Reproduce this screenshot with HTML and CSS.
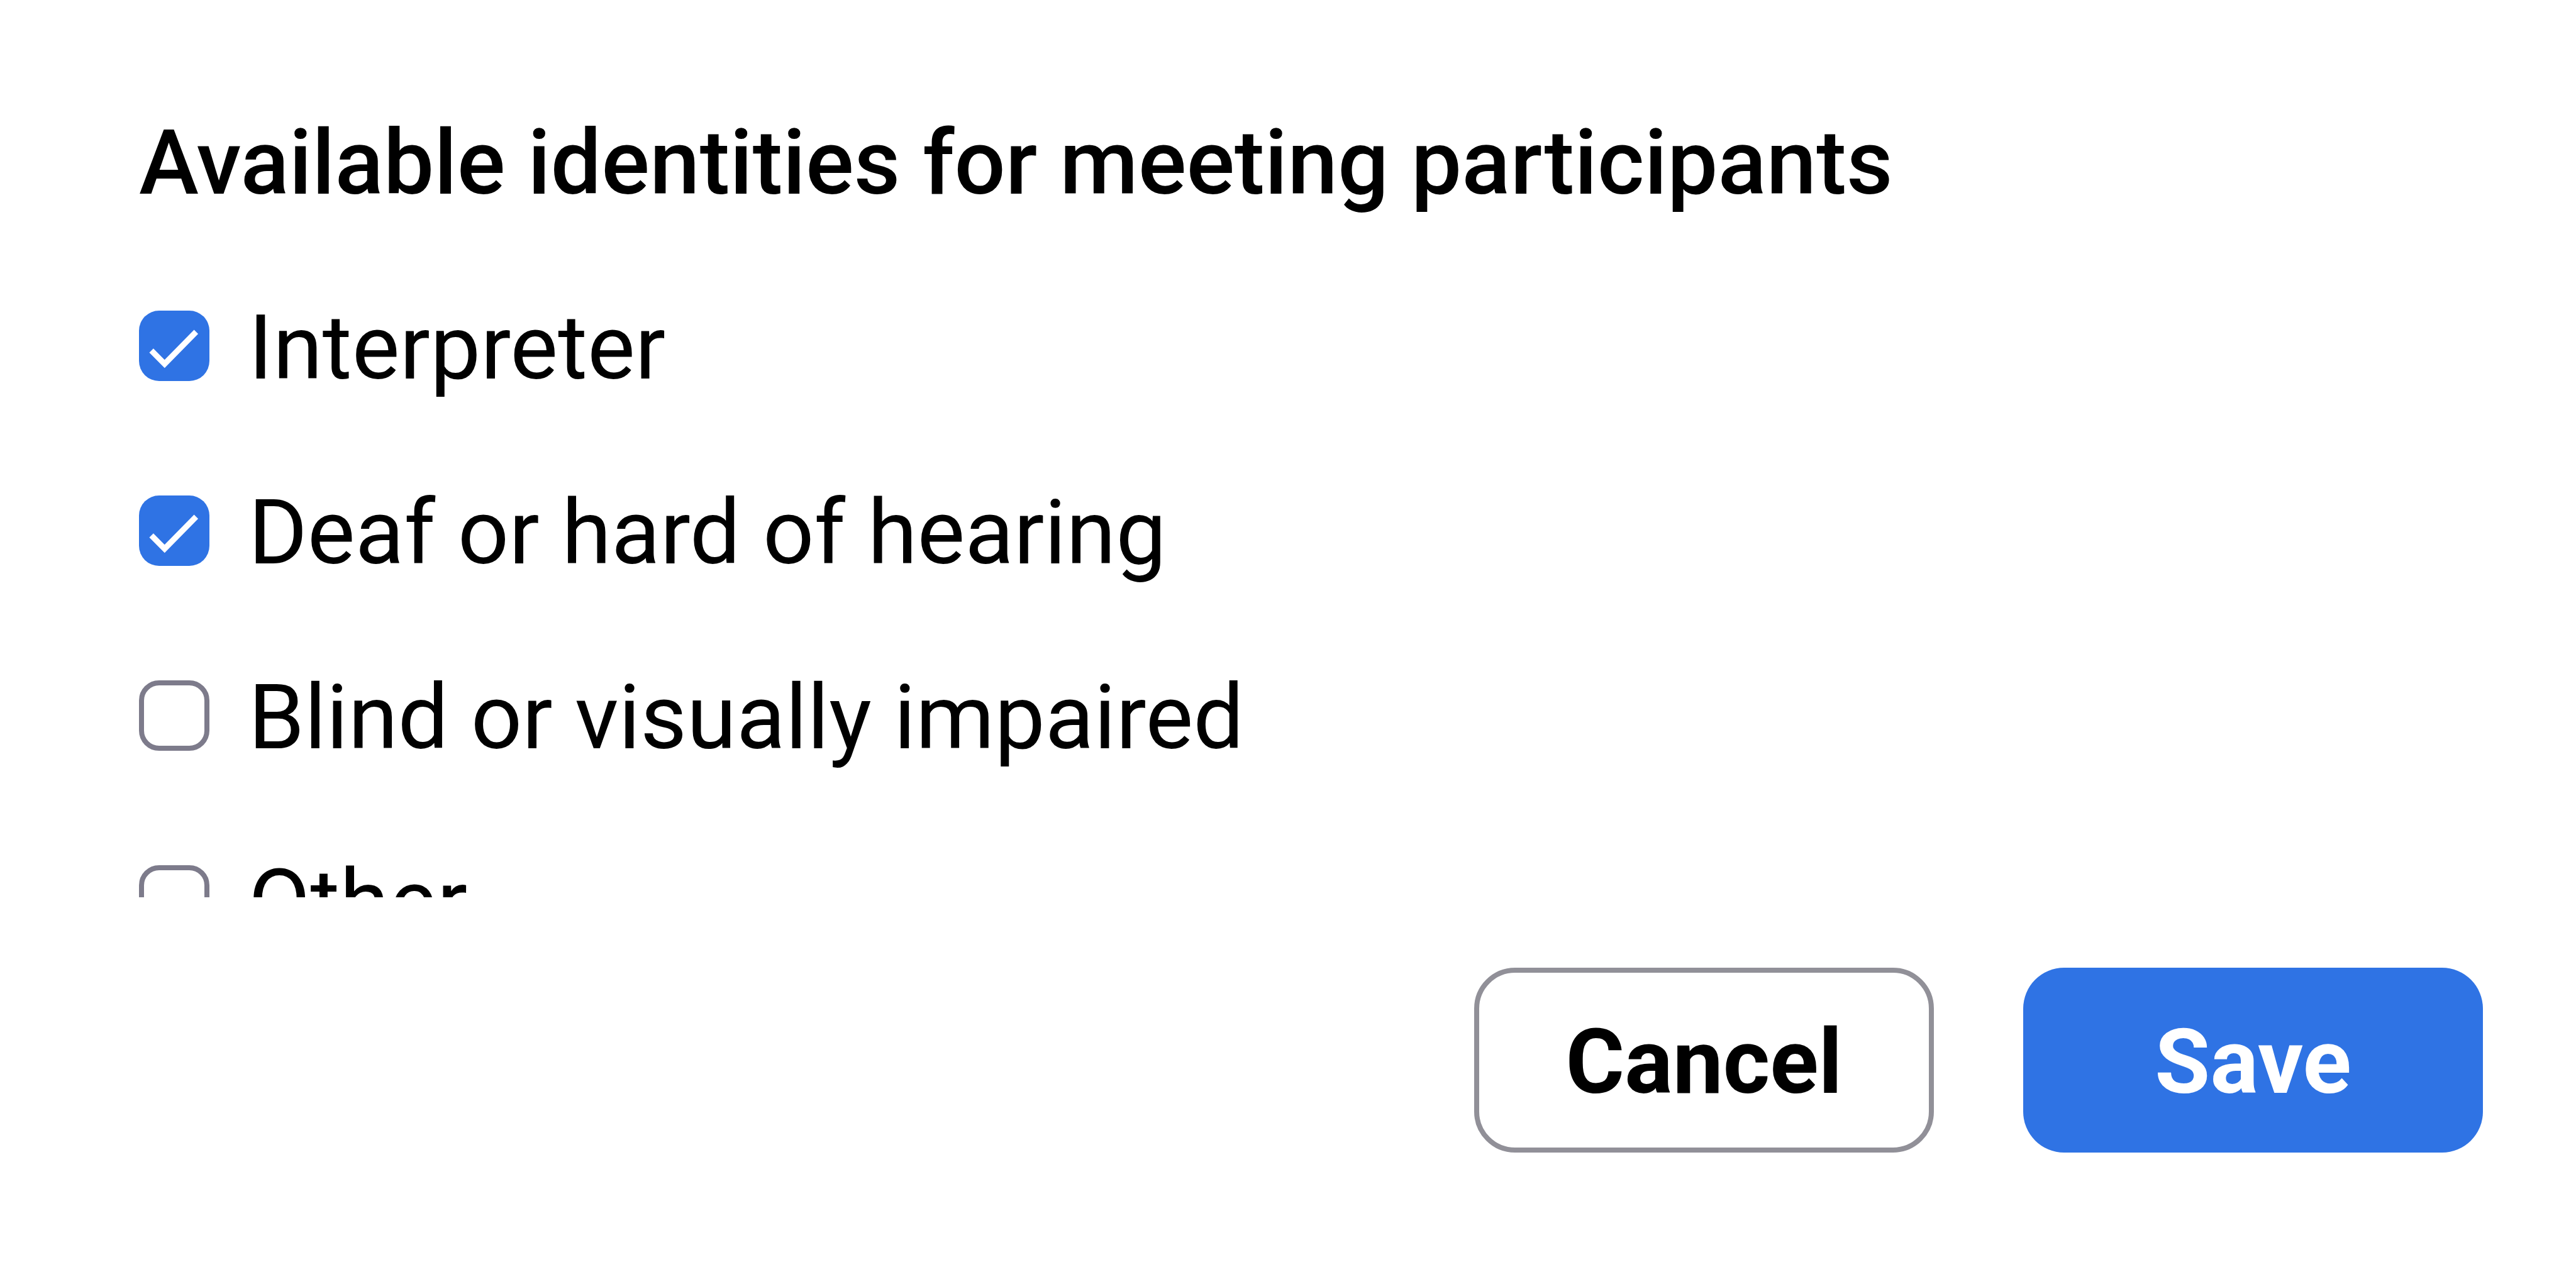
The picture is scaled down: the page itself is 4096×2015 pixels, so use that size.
FILE: index.html
```html
<!DOCTYPE html>
<html lang="en">
<head>
  <meta charset="UTF-8">
  <meta name="viewport" content="width=device-width, initial-scale=1.0">
  <title>Meeting identities</title>
  <link rel="stylesheet" href="styles.css">
</head>
<body>
  <form class="dialog">
    <h1>Available identities for meeting participants</h1>

    <div class="options">
      <label class="option">
        <span class="checkbox checked">
          <svg viewBox="0 0 111 111"><path d="M19.5 63 L40.4 84 L90 33.5"/></svg>
        </span>
        <span class="option-text">Interpreter</span>
      </label>
      <label class="option">
        <span class="checkbox checked">
          <svg viewBox="0 0 111 111"><path d="M19.5 63 L40.4 84 L90 33.5"/></svg>
        </span>
        <span class="option-text">Deaf or hard of hearing</span>
      </label>
      <label class="option">
        <span class="checkbox"></span>
        <span class="option-text">Blind or visually impaired</span>
      </label>
      <label class="option">
        <span class="checkbox"></span>
        <span class="option-text">Other</span>
      </label>
    </div>

    <div class="actions">
      <button type="button" class="btn btn-cancel">Cancel</button>
      <button type="button" class="btn btn-save">Save</button>
    </div>
  </form>
</body>
</html>
```

FILE: styles.css
```css
:root {
  --primary: #2f73e4;
  --text: #000;
  --check-border: #7d7b8b;
  --btn-border: #919098;
}

* {
  margin: 0;
  padding: 0;
  box-sizing: border-box;
  font-family: Roboto, 'Liberation Sans', sans-serif;
}

body {
  background-color: #fff;
  color: var(--text);
  overflow: hidden;
}

.dialog {
  display: flex;
  flex-direction: column;
  width: 4096px;
  height: 2015px;
  padding: 173px 148px 0 221px;
}

h1 {
  height: 230px;
  font-size: 143.2px;
  font-weight: 500;
  line-height: 172px;
  white-space: nowrap;
}

/* the last option is cut off by the scroll area */
.options {
  height: 1024px;
  overflow: hidden;
}

.option {
  display: flex;
  align-items: center;
  gap: 62px;
  height: 294px;
}

.checkbox {
  flex: none;
  width: 112px;
  height: 112px;
  border: 8px solid var(--check-border);
  border-radius: 32px;
}

.checkbox.checked {
  border: none;
  background-color: var(--primary);
}

.checkbox svg {
  display: block;
  width: 100%;
  height: 100%;
  fill: none;
  stroke: #fff;
  stroke-width: 9;
}

.option-text {
  padding-top: 5px;
  font-size: 143px;
  line-height: 172px;
  white-space: nowrap;
}

.actions {
  display: flex;
  justify-content: flex-end;
  gap: 142px;
  margin-top: 112px;
}

.btn {
  width: 731px;
  height: 294px;
  padding-top: 5px;
  border: none;
  border-radius: 65px;
  font-size: 143px;
  font-weight: 700;
}

.btn-cancel {
  border: 8px solid var(--btn-border);
  background-color: #fff;
  color: var(--text);
}

.btn-save {
  background-color: var(--primary);
  color: #fff;
}
```
